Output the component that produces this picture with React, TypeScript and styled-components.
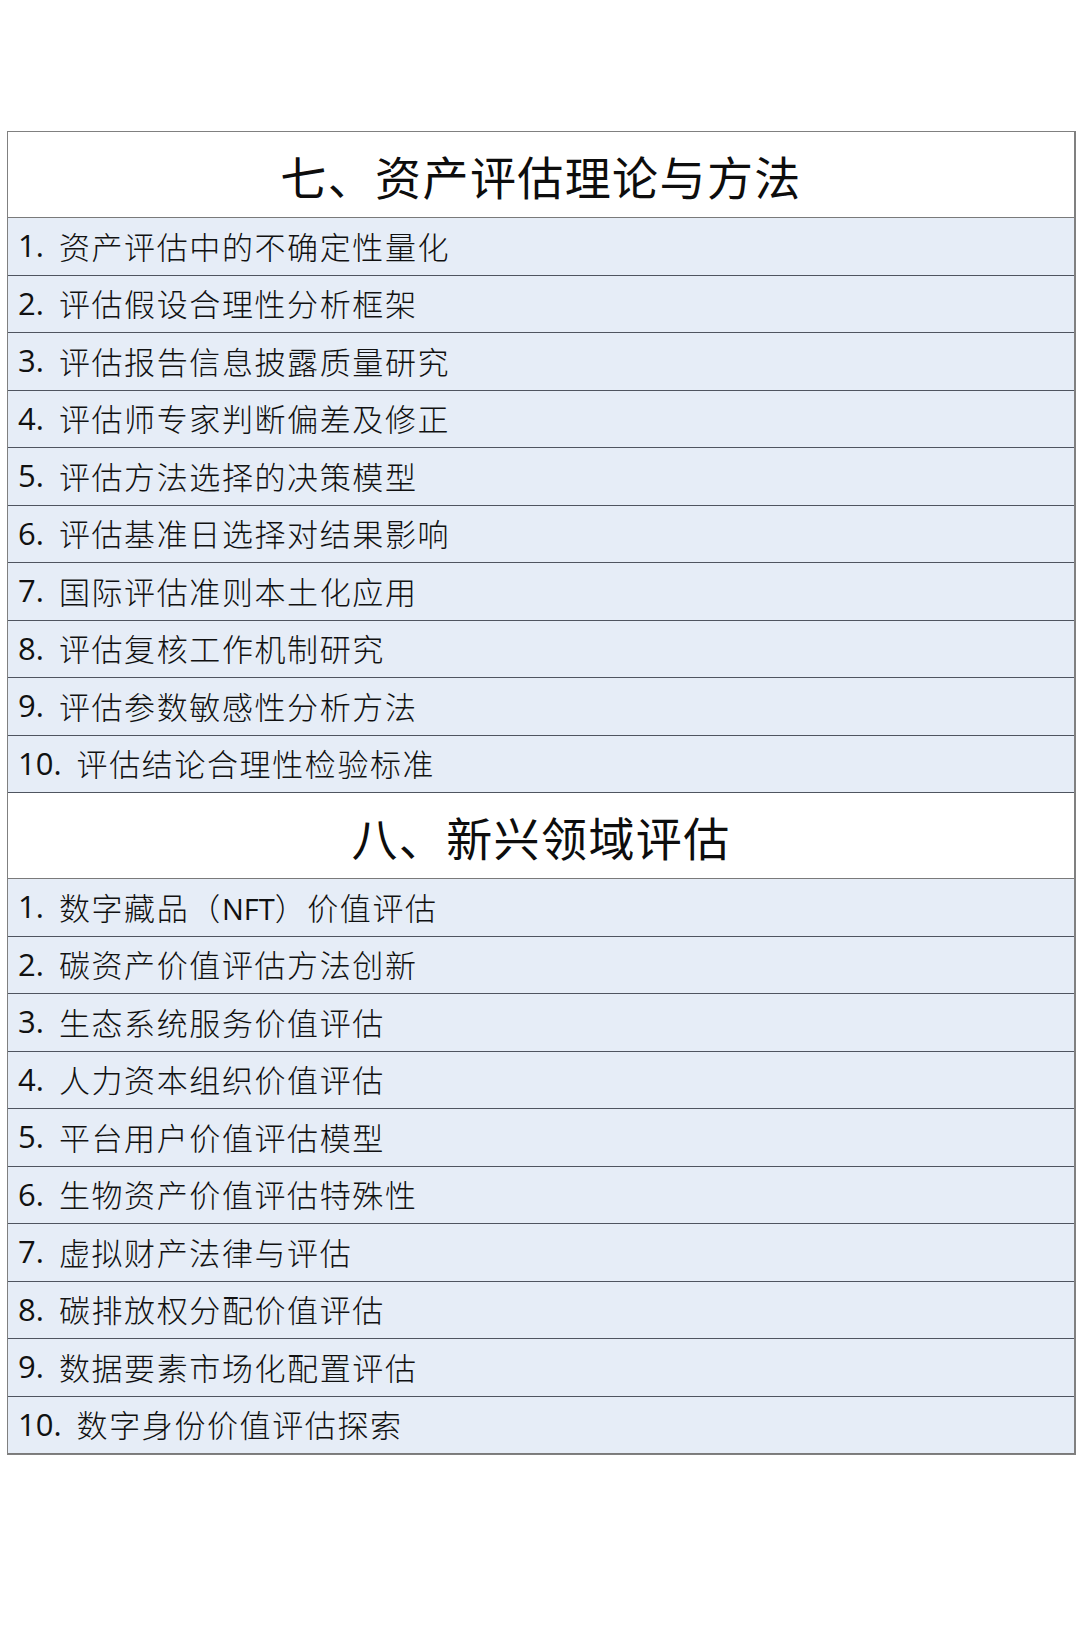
import React from 'react';
import styled, { createGlobalStyle } from 'styled-components';

const GlobalStyle = createGlobalStyle`
  html, body {
    margin: 0;
    padding: 0;
    background: #ffffff;
  }
  body {
    font-family: "Open Sans", "Noto Sans CJK SC", sans-serif;
    color: #111111;
  }
`;

const Page = styled.div`
  width: 1080px;
  min-height: 1646px;
  padding: 131px 0 0 7px;
  box-sizing: border-box;
`;

const Table = styled.div`
  width: 1069px;
  box-sizing: border-box;
  border: 1px solid #808080;
  border-right-width: 2px;
  display: flex;
  flex-direction: column;
`;

const SectionTitle = styled.div`
  height: 86px;
  box-sizing: border-box;
  display: flex;
  align-items: center;
  justify-content: center;
  background: #ffffff;
  border-bottom: 1px solid #7a7a7a;
  font-family: "Noto Sans CJK SC", sans-serif;
  font-size: 46px;
  font-weight: 400;
  color: #0d0d0d;
  letter-spacing: 1.4px;
`;

const Row = styled.div<{ $last?: boolean }>`
  height: 57.5px;
  display: flex;
  align-items: center;
  padding: 0 0 2px 10px;
  box-sizing: border-box;
  background: #e6edf7;
  border-bottom: 1px solid ${(p) => (p.$last ? '#7a7a7a' : '#4f5560')};
  color: #111111;
`;

const Num = styled.span`
  font-family: "Open Sans", sans-serif;
  font-size: 31px;
  margin-right: 15px;
`;

const Label = styled.span`
  font-family: "Noto Sans CJK SC", sans-serif;
  font-weight: 300;
  font-size: 31px;
  letter-spacing: 1.6px;
`;

const Latin = styled.span`
  font-family: "Open Sans", sans-serif;
  font-weight: 400;
  font-size: 29px;
  letter-spacing: 0;
`;

const sections: { title: string; items: string[] }[] = [
  {
    title: '七、资产评估理论与方法',
    items: [
      '资产评估中的不确定性量化',
      '评估假设合理性分析框架',
      '评估报告信息披露质量研究',
      '评估师专家判断偏差及修正',
      '评估方法选择的决策模型',
      '评估基准日选择对结果影响',
      '国际评估准则本土化应用',
      '评估复核工作机制研究',
      '评估参数敏感性分析方法',
      '评估结论合理性检验标准',
    ],
  },
  {
    title: '八、新兴领域评估',
    items: [
      '数字藏品（NFT）价值评估',
      '碳资产价值评估方法创新',
      '生态系统服务价值评估',
      '人力资本组织价值评估',
      '平台用户价值评估模型',
      '生物资产价值评估特殊性',
      '虚拟财产法律与评估',
      '碳排放权分配价值评估',
      '数据要素市场化配置评估',
      '数字身份价值评估探索',
    ],
  },
];

// split out latin runs (e.g. "NFT") so they get the latin face
const renderLabel = (text: string) =>
  text.split(/([A-Za-z]+)/).map((part, i) =>
    /^[A-Za-z]+$/.test(part) ? <Latin key={i}>{part}</Latin> : <React.Fragment key={i}>{part}</React.Fragment>
  );

const App: React.FC = () => (
  <>
    <GlobalStyle />
    <Page>
      <Table>
        {sections.map((section, si) => (
          <React.Fragment key={section.title}>
            <SectionTitle>{section.title}</SectionTitle>
            {section.items.map((item, i) => (
              <Row key={item} $last={si === sections.length - 1 && i === section.items.length - 1}>
                <Num>{i + 1}.</Num>
                <Label>{renderLabel(item)}</Label>
              </Row>
            ))}
          </React.Fragment>
        ))}
      </Table>
    </Page>
  </>
);

export default App;
